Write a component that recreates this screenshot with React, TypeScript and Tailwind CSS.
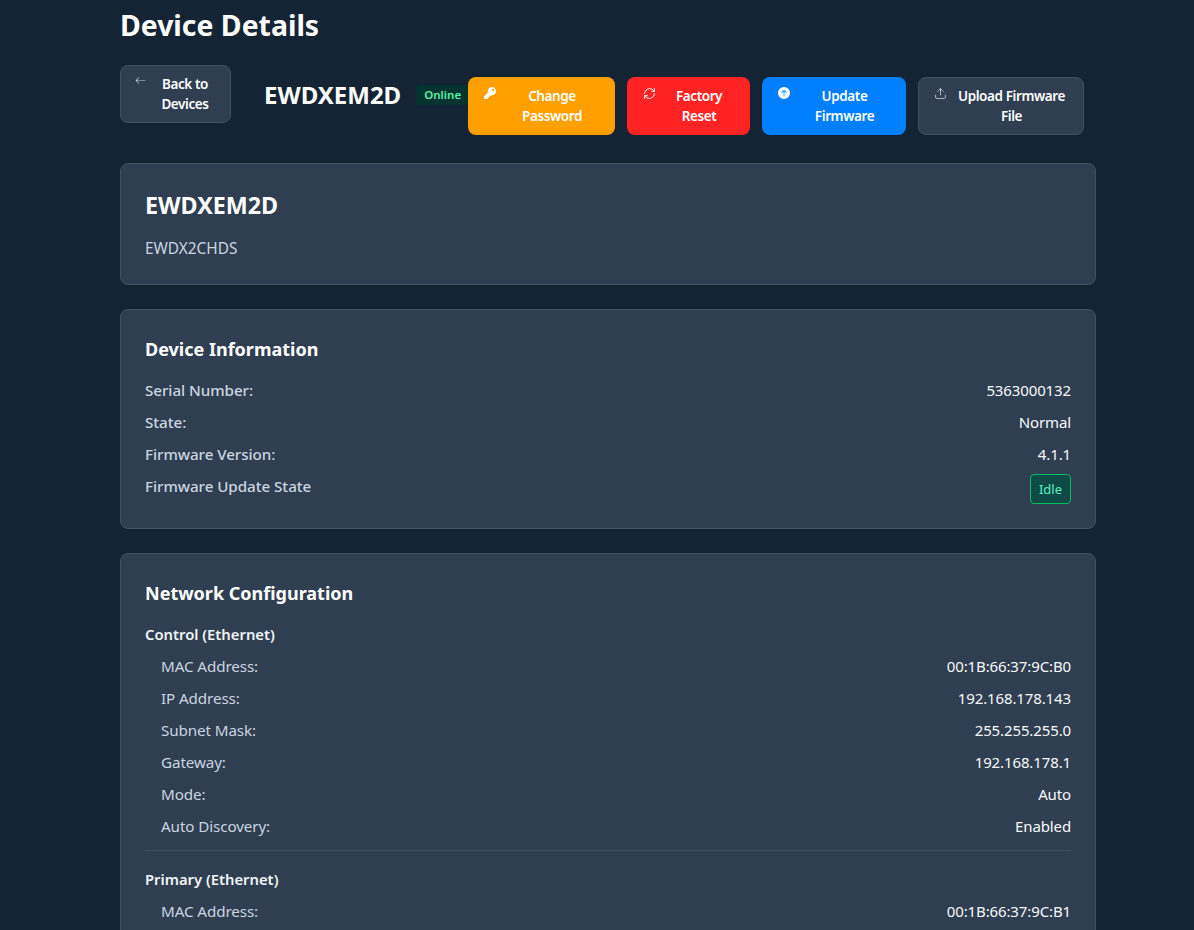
import { BsArrowLeft, BsArrowUpCircleFill } from "react-icons/bs";
import { FaKey } from "react-icons/fa";
import { RefreshCw, Upload } from "lucide-react";
import type { ReactNode } from "react";

const font = { fontFamily: '"Noto Sans", sans-serif' };

function Btn({ icon, children, cls }: { icon: ReactNode; children: ReactNode; cls: string }) {
  return (
    <div className={`flex shrink-0 items-start gap-2 rounded-lg px-4 text-[13.5px] leading-[20px] font-semibold tracking-[-0.4px] text-white ${cls}`}>
      <span className="mt-[1px] w-[13px] shrink-0 text-[12px]">{icon}</span>
      <span className="flex-1 text-center">{children}</span>
    </div>
  );
}

function Row({ k, v, sub }: { k: string; v: string; sub?: boolean }) {
  return (
    <div className={`flex h-8 items-start justify-between pt-[1px] text-[15.2px] leading-[16px] ${sub ? "pl-4" : ""}`}>
      <span className={sub ? "tracking-[-0.1px] text-[#cbd5e1]" : "font-medium tracking-[-0.05px] text-[#cbd5e1]"}>{k}</span>
      <span className="text-[15px] tracking-[-0.12px] text-[#f8fafc]">{v}</span>
    </div>
  );
}

function Card({ children, cls }: { children: ReactNode; cls?: string }) {
  return <section className={`mb-6 rounded-lg border border-[#435063] bg-[#2f3e50] p-6 ${cls ?? ""}`}>{children}</section>;
}

export default function App() {
  return (
    <div className="h-[930px] overflow-hidden bg-[#152435] text-white" style={font}>
      <div className="ml-[120px] w-[976px]">
        <h1 className="h-[65px] pt-[4px] text-[28.4px] leading-[42px] font-bold">Device Details</h1>
        <header className="flex h-[98px] items-start">
          <div className="flex w-[111px] shrink-0 items-start gap-2 rounded-lg border border-[#435063] bg-[#2f3e50] px-[14px] py-[8px] text-[13.5px] leading-[20px] font-semibold tracking-[-0.4px]">
            <BsArrowLeft className="mt-[1px] shrink-0 text-[11px] text-[#cbd5e1]" />
            <span className="flex-1 text-center">Back to Devices</span>
          </div>
          <div className="relative ml-[33px] mt-[12px] flex h-[36px] w-[204px] shrink-0 items-center">
            <span className="text-[24px] leading-[36px] font-bold">EWDXEM2D</span>
            <span className="ml-[15px] w-[52px] shrink-0 rounded-l-[4px] bg-[#04342f] py-[1px] pl-[8px] text-[11.5px] leading-[18px] font-semibold whitespace-nowrap text-[#5cf2a6]">Online</span>
          </div>
          <div className="mt-[12px] flex gap-3">
            <Btn icon={<FaKey />} cls="w-[147px] bg-[#ff9f00] py-[9px]">Change Password</Btn>
            <Btn icon={<RefreshCw size={13} strokeWidth={1.75} />} cls="w-[123px] bg-[#ff2323] py-[9px]">Factory Reset</Btn>
            <Btn icon={<BsArrowUpCircleFill />} cls="w-[144px] bg-[#0080ff] py-[9px]">Update Firmware</Btn>
            <Btn icon={<Upload size={13} strokeWidth={1.5} className="text-[#cbd5e1]" />} cls="w-[166px] border border-[#435063] bg-[#2f3e50] py-[8px] !px-[15px]">Upload Firmware File</Btn>
          </div>
        </header>

        <Card cls="h-[122px]">
          <h2 className="-mt-[1px] text-[23.3px] leading-[36px] font-bold">EWDXEM2D</h2>
          <p className="mt-[15px] text-[15.4px] leading-[22px] text-[#cbd5e1]">EWDX2CHDS</p>
        </Card>

        <Card cls="h-[220px]">
          <h3 className="mb-[17px] text-[18px] leading-[30px] font-bold">Device Information</h3>
          <Row k="Serial Number:" v="5363000132" />
          <Row k="State:" v="Normal" />
          <Row k="Firmware Version:" v="4.1.1" />
          <div className="flex items-start justify-between pt-[1px] text-[15.2px] leading-[16px]">
            <span className="font-medium tracking-[-0.05px] text-[#cbd5e1]">Firmware Update State</span>
            <span className="-mt-[4px] rounded-[4px] border border-[#00c060] bg-[#0f4a47] px-2 py-[4px] text-[13px] leading-[20px] text-[#5cf2c0]">Idle</span>
          </div>
        </Card>

        <Card>
          <h3 className="mb-[17px] text-[18px] leading-[30px] font-bold">Network Configuration</h3>
          <h4 className="h-8 pt-[1px] text-[14.8px] leading-[16px] font-semibold text-[#f1f5f9]">Control (Ethernet)</h4>
          <Row sub k="MAC Address:" v="00:1B:66:37:9C:B0" />
          <Row sub k="IP Address:" v="192.168.178.143" />
          <Row sub k="Subnet Mask:" v="255.255.255.0" />
          <Row sub k="Gateway:" v="192.168.178.1" />
          <Row sub k="Mode:" v="Auto" />
          <Row sub k="Auto Discovery:" v="Enabled" />
          <div className="mt-[1px] mb-[19px] border-t border-[#435063]" />
          <h4 className="h-8 pt-[1px] text-[14.8px] leading-[16px] font-semibold text-[#f1f5f9]">Primary (Ethernet)</h4>
          <Row sub k="MAC Address:" v="00:1B:66:37:9C:B1" />
        </Card>
      </div>
    </div>
  );
}
